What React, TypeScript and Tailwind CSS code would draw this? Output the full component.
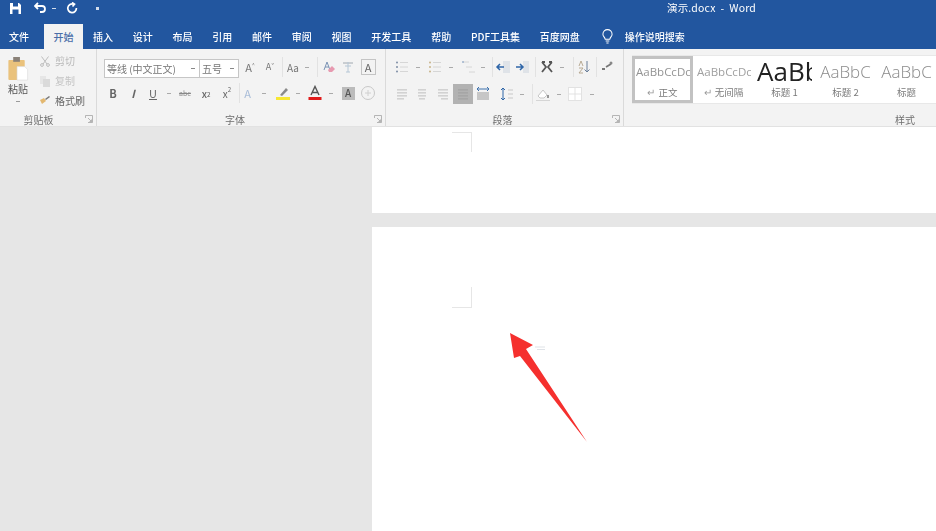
import type { ReactNode } from "react";

const cjk = { fontFamily: '"Noto Sans CJK SC", "Noto Sans", sans-serif' };

const tabs = ["插入", "设计", "布局", "引用", "邮件", "审阅", "视图", "开发工具", "帮助", "PDF工具集", "百度网盘"];

function Glyph({ className = "w-5", children }: { className?: string; children: ReactNode }) {
  return <div className={`flex h-5 shrink-0 items-center justify-center ${className}`}>{children}</div>;
}

function Icon({ children }: { children: ReactNode }) {
  return (
    <svg width="16" height="16" viewBox="0 0 16 16" fill="none">
      {children}
    </svg>
  );
}

function Caret({ className = "w-3" }: { className?: string }) {
  return (
    <Glyph className={className}>
      <span className="h-px w-[4px] bg-[#aaaaaa]" />
    </Glyph>
  );
}

function Sep({ className = "" }: { className?: string }) {
  return <div className={`h-5 w-px shrink-0 bg-[#e2e2e2] ${className}`} />;
}

function Launcher() {
  return (
    <svg className="absolute bottom-[3px] right-[3px]" width="8" height="8" viewBox="0 0 8 8" fill="none">
      <path d="M.5 3V.5H7.5V7.5H3M3 3L6.5 6.5M6.5 4.5V6.5H4.5" stroke="#a5a5a5" strokeWidth=".8" />
    </svg>
  );
}

function GroupLabel({ children }: { children: ReactNode }) {
  return <div className="mt-auto h-[14px] text-center text-[10px] leading-[15px] text-[#6f6f6f]">{children}</div>;
}

function Lines({ x = [3, 3, 3, 3], w = [10, 10, 10, 10], color = "#d2d2d2" }: { x?: number[]; w?: number[]; color?: string }) {
  return (
    <>
      {x.map((lineX, i) => (
        <rect key={i} x={lineX} y={3 + i * 3} width={w[i]} height="1.6" fill={color} />
      ))}
    </>
  );
}

function ListIcon({ dots = "#7f8fa6" }: { dots?: string }) {
  return (
    <Icon>
      <circle cx="3" cy="3.5" r="1" fill={dots} />
      <circle cx="3" cy="8" r="1" fill={dots} />
      <circle cx="3" cy="12.5" r="1" fill={dots} />
      <path d="M6 3.5H14M6 8H14M6 12.5H14" stroke="#d6d6d6" />
    </Icon>
  );
}

function StyleItem({ sample, label, selected, mark, className = "" }: { sample: string; label: string; selected?: boolean; mark?: boolean; className?: string }) {
  return (
    <div className={`flex h-full w-[61px] shrink-0 flex-col items-center overflow-hidden ${selected ? "border-[3px] border-[#c2c2c2]" : "border-[3px] border-transparent"}`}>
      <div className={`flex h-[25px] w-full items-center overflow-hidden whitespace-nowrap leading-[25px] ${className}`} style={{ fontFamily: '"Open Sans", sans-serif' }}>
        {sample}
      </div>
      <div className="mt-[2px] text-[9.5px] leading-[13px] text-[#7a7a7a]" style={cjk}>
        {mark && <span className="mr-[3px] text-[#999]">↵</span>}
        {label}
      </div>
    </div>
  );
}

export default function App() {
  return (
    <div className="flex h-[531px] w-[936px] flex-col overflow-hidden bg-[#e6e6e6]" style={cjk}>
      <div className="relative z-[1] flex h-[24px] shrink-0 items-center bg-[#22569f] pb-[8px] text-white blur-[0.3px]">
        <svg className="ml-[10px]" width="11" height="11" viewBox="0 0 11 11">
          <path d="M0 0H9L11 2V11H0Z" fill="#fff" />
          <rect x="3" y="0" width="5" height="3.5" fill="#22569f" />
          <rect x="2.5" y="6.5" width="6" height="4.5" fill="#22569f" />
        </svg>
        <svg className="ml-[13px]" width="13" height="12" viewBox="0 0 13 12" fill="none">
          <path d="M4 1L1 4L4 7M1.5 4H8A3 3 0 0 1 8 10H6" stroke="#fff" strokeWidth="1.8" />
        </svg>
        <span className="ml-[5px] h-px w-[4px] bg-white/80" />
        <svg className="ml-[10px]" width="12" height="12" viewBox="0 0 12 12" fill="none">
          <path d="M7.5 2.2A4.3 4.3 0 1 0 10.4 6M6 .5L8.5 2.2L6.5 4.5" stroke="#fff" strokeWidth="1.7" />
        </svg>
        <span className="ml-[18px] h-[3px] w-[3px] bg-white/80" />
        <div className="ml-[568px] whitespace-nowrap text-[10.5px] leading-none tracking-[0.15px]">
          演示.docx&nbsp; - &nbsp;Word
        </div>
      </div>

      <div className="relative z-[1] flex h-[25px] shrink-0 items-end bg-[#22569f] text-[10px] leading-[25px] text-white">
        <div className="h-[25px] w-[44px] pl-[9px] font-medium blur-[0.3px]">文件</div>
        <div className="h-[25px] w-[39px] bg-[#f3f3f3] text-center font-medium text-[#4a6ea8]">开始</div>
        {tabs.map((tab) => (
          <div key={tab} className="h-[25px] whitespace-nowrap px-[9.9px] font-medium blur-[0.3px]">
            {tab}
          </div>
        ))}
        <svg className="mb-[5px] ml-[12px]" width="11" height="15" viewBox="0 0 12 16" fill="none">
          <path d="M3.5 11C3 8.5 1 8 1 5.5A5 5 0 0 1 11 5.5C11 8 9 8.500 8.500 11ZM4 13H8M4.800 15H7.200" stroke="#fff" strokeWidth="1.100" />
        </svg>
        <div className="ml-[12px] h-[25px] whitespace-nowrap font-medium blur-[0.3px]">操作说明搜索</div>
      </div>

      <div className="flex h-[78px] shrink-0 border-b border-[#e2e2e2] bg-[#f3f3f3] blur-[0.4px]">
        <div className="relative flex w-[97px] shrink-0 flex-col border-r border-[#dadada]">
          <div className="flex pt-[2px]">
            <div className="ml-[7px] mt-[6px] flex w-[22px] flex-col items-center">
              <svg width="22" height="24" viewBox="0 0 22 25">
                <rect x="1" y="3" width="17" height="21" rx="1" fill="#eac27c" />
                <rect x="6" y="0" width="7" height="5" fill="#8a8178" />
                <path d="M10 10H18L21 13V24H10Z" fill="#fff" stroke="#d9d9d9" strokeWidth=".6" />
              </svg>
              <div className="mt-[1px] text-[10px] leading-[14px] text-[#555]">粘贴</div>
              <span className="mt-[5px] h-px w-[4px] bg-[#9a9a9a]" />
            </div>
            <div className="ml-[11px] flex flex-col text-[10px] leading-[14px]">
              <div className="flex h-[20px] items-center gap-[5px] text-[#b9b9b9]">
                <svg width="10" height="11" viewBox="0 0 10 11" fill="none">
                  <path d="M1.500 .5L7 8M8.500 .5L3 8" stroke="#bdbdbd" />
                  <circle cx="2" cy="9" r="1.400" stroke="#bdbdbd" />
                  <circle cx="8" cy="9" r="1.400" stroke="#bdbdbd" />
                </svg>
                剪切
              </div>
              <div className="flex h-[20px] items-center gap-[5px] text-[#c4c4c4]">
                <svg width="10" height="11" viewBox="0 0 10 11">
                  <path d="M0 0H6V8H0Z" fill="#e6e6e6" />
                  <path d="M3 3H10V11H3Z" fill="#dadada" />
                </svg>
                复制
              </div>
              <div className="flex h-[19px] items-center gap-[4px] text-[#666]">
                <svg width="10" height="9" viewBox="0 0 10 9">
                  <path d="M0 4L4 2L6 5L2 8Z" fill="#e3b870" />
                  <path d="M5 3L9 0L10 1L6 4Z" fill="#777" />
                </svg>
                <span className="ml-px">格式刷</span>
              </div>
            </div>
          </div>
          <GroupLabel>
            <span className="mr-[19px]">剪贴板</span>
          </GroupLabel>
          <Launcher />
        </div>

        <div className="relative flex w-[289px] shrink-0 flex-col border-r border-[#dadada]">
          <div className="mt-[8px] flex h-5 items-center pl-[7px]">
            <div className="mt-[2px] flex h-[19px] w-[96px] shrink-0 items-center justify-between border border-[#c6c6c6] bg-white pl-[2px] pr-[4px] text-[10px] text-[#777]">
              <span className="whitespace-nowrap">等线 (中文正文)</span>
              <span className="h-px w-[4px] bg-[#888]" />
            </div>
            <div className="-ml-px mt-[2px] flex h-[19px] w-[40px] shrink-0 items-center justify-between border border-[#c6c6c6] bg-white pl-[2px] pr-[4px] text-[10px] text-[#777]">
              <span>五号</span>
              <span className="h-px w-[4px] bg-[#888]" />
            </div>
            <Glyph className="ml-px w-5 text-[11px] text-[#777]">A<sup className="text-[5px]">^</sup></Glyph>
            <Glyph className="w-5 text-[9px] text-[#777]">A<sup className="text-[5px]">ˇ</sup></Glyph>
            <Sep className="ml-[2px]" />
            <Glyph className="w-5 text-[10px] text-[#777]">Aa</Glyph>
            <Caret className="w-2" />
            <Sep className="ml-[6px]" />
            <Glyph>
              <Icon>
                <path d="M4 11L7 3L10 11M5 8H9" stroke="#7b93b5" />
                <path d="M8 11L12 7L15 10L12 13H9Z" fill="#e79ab0" />
              </Icon>
            </Glyph>
            <Glyph>
              <Icon>
                <path d="M3 4H13" stroke="#a0a8b0" />
                <path d="M8 3V13M5 7H11M6 13H10" stroke="#b6c7d6" />
              </Icon>
            </Glyph>
            <Glyph>
              <div className="flex h-[16px] w-[15px] items-center justify-center border border-[#c4c4c4] text-[11px] leading-none text-[#666]">A</div>
            </Glyph>
          </div>
          <div className="mt-[6px] flex h-5 items-center pl-[6px] text-[#666]">
            <Glyph className="w-5 text-[11px] font-bold">B</Glyph>
            <Glyph className="w-5 text-[11px] font-bold italic">I</Glyph>
            <Glyph className="w-5 text-[11px] underline">U</Glyph>
            <Caret />
            <Glyph className="w-5 text-[7px] text-[#888] line-through">abc</Glyph>
            <Glyph className="ml-px w-5 text-[10px] font-medium">x<sub className="text-[6px]">2</sub></Glyph>
            <Glyph className="ml-px w-5 text-[10px]">x<sup className="text-[6px]">2</sup></Glyph>
            <Sep className="ml-[2px]" />
            <Glyph className="w-[15px] text-[11px] text-[#a8bcd8]">A</Glyph>
            <Caret className="ml-[3px] w-3" />
            <Glyph className="ml-[3px] w-5">
              <Icon>
                <path d="M5 10L11 3L13 5L7 11Z" fill="#8a8a8a" />
                <rect x="1" y="12" width="14" height="3" fill="#f7e733" />
              </Icon>
            </Glyph>
            <Caret className="w-[10px]" />
            <Glyph className="ml-[2px] w-5">
              <Icon>
                <path d="M4 10L8 1.500L12 10M5.500 7.500H10.500" stroke="#555" strokeWidth="1.400" />
                <rect x="1.500" y="12" width="13" height="3" fill="#e01b1b" />
              </Icon>
            </Glyph>
            <Caret />
            <Glyph className="ml-px w-5">
              <div className="flex h-[13px] w-[13px] items-center justify-center bg-[#bbbbbb] text-[10px] font-medium leading-none text-[#555]">A</div>
            </Glyph>
            <Glyph>
              <svg width="16" height="16" viewBox="0 0 16 16" fill="none">
                <circle cx="8" cy="8" r="6.500" stroke="#c8c8c8" />
                <path d="M5 8H11M8 5V11" stroke="#d0d0d0" />
              </svg>
            </Glyph>
          </div>
          <GroupLabel>
            <span className="mr-[12px]">字体</span>
          </GroupLabel>
          <Launcher />
        </div>

        <div className="relative flex w-[238px] shrink-0 flex-col border-r border-[#dadada]">
          <div className="mt-[8px] flex h-5 items-center pl-[6px]">
            <Glyph><ListIcon /></Glyph>
            <Caret />
            <Glyph className="ml-px w-5"><ListIcon dots="#c9b48a" /></Glyph>
            <Caret />
            <Glyph className="ml-[2px] w-5">
              <Icon>
                <path d="M2 3H8M5 8H11M8 13H14" stroke="#d6d6d6" />
                <circle cx="2" cy="3" r="1" fill="#9fb3cc" />
              </Icon>
            </Glyph>
            <Caret className="w-2" />
            <Sep className="ml-[5px]" />
            <Glyph className="w-[19px]">
              <Icon>
                <rect x="8" y="2" width="7" height="12" fill="#dfe3e8" />
                <path d="M9 8H2M5 5L2 8L5 11" stroke="#2f66a8" strokeWidth="1.500" />
              </Icon>
            </Glyph>
            <Glyph>
              <Icon>
                <rect x="9" y="2" width="6" height="12" fill="#dfe3e8" />
                <path d="M2 8H9M6 5L9 8L6 11" stroke="#2f66a8" strokeWidth="1.500" />
              </Icon>
            </Glyph>
            <Sep className="ml-[3px]" />
            <Glyph className="ml-px w-5">
              <Icon>
                <path d="M3 3L7 8L3 13M13 3L9 8L13 13M3 3H6M13 3H10" stroke="#555" strokeWidth="1.800" />
              </Icon>
            </Glyph>
            <Caret className="w-[10px]" />
            <Sep className="ml-[6px]" />
            <Glyph>
              <Icon>
                <path d="M11 2V13M8.500 10.500L11 13L13.500 10.500" stroke="#6b7f99" />
                <path d="M3 7L5 2L7 7M3 9H7L3 14H7" stroke="#b2a38a" strokeWidth=".9" />
              </Icon>
            </Glyph>
            <Sep className="ml-[2px]" />
            <Glyph>
              <Icon>
                <path d="M3 10H6M7 8L12 5" stroke="#777" strokeWidth="1.800" />
                <circle cx="12" cy="4" r="1.500" fill="#888" />
              </Icon>
            </Glyph>
          </div>
          <div className="mt-[7px] flex h-5 items-center pl-[6px]">
            <Glyph><Icon><Lines w={[10, 10, 10, 7]} /></Icon></Glyph>
            <Glyph><Icon><Lines x={[4, 4, 4, 5]} w={[8, 8, 8, 6]} /></Icon></Glyph>
            <Glyph className="ml-px w-5"><Icon><Lines x={[3, 3, 3, 6]} w={[10, 10, 10, 7]} /></Icon></Glyph>
            <Glyph className="w-5 bg-[#b2b2b2]"><Icon><Lines color="#a6a6a6" /></Icon></Glyph>
            <Glyph>
              <Icon>
                <rect x="2" y="6" width="12" height="8" fill="#c6c6c6" />
                <path d="M2 3H14M4 1L2 3L4 5M12 1L14 3L12 5" stroke="#3f72ad" />
              </Icon>
            </Glyph>
            <Glyph className="ml-[4px] w-5">
              <Icon>
                <path d="M4 2V14M2 4L4 2L6 4M2 12L4 14L6 12" stroke="#2f66a8" />
                <path d="M9 4H14M9 8H14M9 12H14" stroke="#d6d6d6" strokeWidth="1.500" />
              </Icon>
            </Glyph>
            <Caret className="w-[10px]" />
            <Sep className="ml-[5px]" />
            <Glyph>
              <Icon>
                <path d="M3 10L8 4L12 9L9 12H5Z" fill="#fff" stroke="#c7c7c7" />
                <path d="M13 9V12" stroke="#777" strokeWidth="1.500" />
                <path d="M1 14.500H15" stroke="#d5d5d5" />
              </Icon>
            </Glyph>
            <Caret />
            <Glyph>
              <svg width="14" height="14" viewBox="0 0 14 14">
                <rect width="14" height="14" fill="#e2e2e2" />
                <rect x="1" y="1" width="5.500" height="5.500" fill="#fff" />
                <rect x="7.500" y="1" width="5.500" height="5.500" fill="#fff" />
                <rect x="1" y="7.500" width="5.500" height="5.500" fill="#fff" />
                <rect x="7.500" y="7.500" width="5.500" height="5.500" fill="#fff" />
              </svg>
            </Glyph>
            <Caret className="w-[14px]" />
          </div>
          <GroupLabel>
            <span className="mr-[4px]">段落</span>
          </GroupLabel>
          <Launcher />
        </div>

        <div className="flex min-w-0 flex-1 flex-col">
          <div className="ml-[8px] mt-[6px] flex h-[49px] overflow-hidden border-y border-[#e8e8e8] bg-white">
            <StyleItem sample="AaBbCcDc" label="正文" mark selected className="pl-px text-[11.5px] text-[#949494]" />
            <StyleItem sample="AaBbCcDc" label="无间隔" mark className="pl-px text-[11.5px] text-[#a0a0a0]" />
            <StyleItem sample="AaBb" label="标题 1" className="text-[26px] text-[#222]" />
            <StyleItem sample="AaBbC" label="标题 2" className="justify-center text-[17px] font-light text-[#8a8a8a]" />
            <StyleItem sample="AaBbC" label="标题" className="justify-center text-[17px] font-light text-[#8a8a8a]" />
          </div>
          <GroupLabel>
            <span className="ml-[271px] block text-left">样式</span>
          </GroupLabel>
        </div>
      </div>

      <div className="relative flex min-h-0 flex-1">
        <div className="w-[372px] shrink-0" />
        <div className="flex min-w-0 flex-1 flex-col gap-[14px]">
          <div className="relative h-[86px] bg-white">
            <div className="absolute left-[80px] top-[5px] h-[20px] w-[20px] border-r border-t border-[#e6e6e6]" />
          </div>
          <div className="relative flex-1 bg-white">
            <div className="absolute left-[80px] top-[60px] h-[21px] w-[20px] border-b border-r border-[#e6e6e6]" />
          </div>
        </div>
        <svg className="absolute left-[505px] top-[200px]" width="90" height="120" viewBox="505 327 90 120">
          <path d="M535 347H545M537 349.500H545" stroke="#dfe3e8" strokeWidth="1.200" />
          <polygon points="510,333 533,345 526,349 587,442 520,356 514,358" fill="#f5302e" />
        </svg>
      </div>
    </div>
  );
}
